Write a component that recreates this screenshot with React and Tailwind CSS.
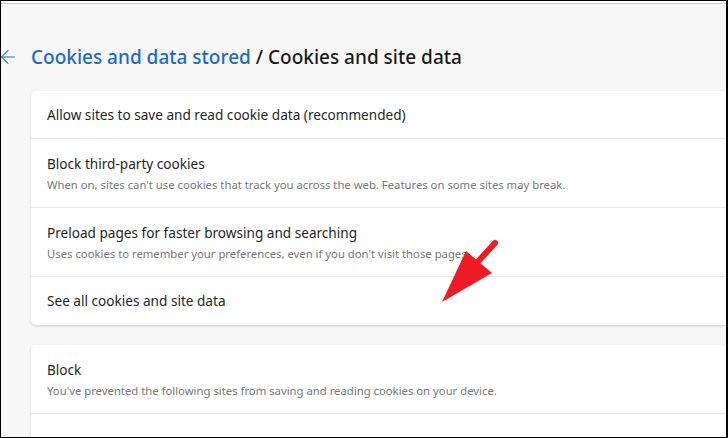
import { ArrowLeft } from 'lucide-react';

const font = { fontFamily: '"Segoe UI", "Noto Sans", "Open Sans", sans-serif' };

const Row = ({ title, desc, last }) => (
  <div className={`flex flex-col justify-center px-4 ${desc ? 'h-[69px]' : 'h-[48px]'} ${last ? '' : 'border-b border-[#e8e8e8]'}`}>
    <div className="text-[13.6px] leading-[20px] text-[#1f1f1f]">{title}</div>
    {desc && <div className="mt-[3px] text-[11.3px] leading-[16px] text-[#777777]">{desc}</div>}
  </div>
);

const Pointer = () => (
  <svg className="absolute left-0 top-0 pointer-events-none" width="728" height="438" viewBox="0 0 728 438">
    <line x1="495" y1="243" x2="474" y2="266" stroke="#ed1c24" strokeWidth="6" strokeLinecap="round" />
    <polygon points="466,251 492,273 442,302" fill="#ed1c24" />
  </svg>
);

export default function App() {
  return (
    <div className="relative w-[728px] h-[438px] overflow-hidden bg-black" style={font}>
      <div className="absolute left-[1px] top-[1px] right-[2px] bottom-[1px] flex flex-col bg-[#f7f7f7] overflow-hidden">
        <div className="h-[2px] bg-white shrink-0" />
        <div className="h-[1px] bg-[#c9c9c9] shrink-0" />
        <div className="flex items-center h-[52px] mt-[27px] shrink-0">
          <ArrowLeft size={22} strokeWidth={1.1} className="text-[#1b6ac9] ml-[-4px]" />
          <h1 className="ml-[12px] text-[19px] leading-[28px] font-medium text-[#1a1a1a] whitespace-nowrap">
            <span className="text-[#1b6ac9]">Cookies and data stored</span> / Cookies and site data
          </h1>
        </div>
        <div className="ml-[30px] mt-[8px] w-[720px] shrink-0 bg-white rounded-[5px] shadow-[0_1px_3px_rgba(0,0,0,0.16)]">
          <Row title="Allow sites to save and read cookie data (recommended)" />
          <Row
            title="Block third-party cookies"
            desc="When on, sites can't use cookies that track you across the web. Features on some sites may break."
          />
          <Row
            title="Preload pages for faster browsing and searching"
            desc="Uses cookies to remember your preferences, even if you don't visit those pages"
          />
          <Row title="See all cookies and site data" last />
        </div>
        <div className="ml-[30px] mt-[20px] w-[720px] shrink-0 bg-white rounded-[5px] shadow-[0_1px_3px_rgba(0,0,0,0.16)]">
          <div className="flex flex-col justify-center px-4 h-[69px] border-b border-[#e8e8e8]">
            <div className="text-[13.6px] leading-[20px] text-[#1f1f1f]">Block</div>
            <div className="mt-[3px] text-[11.3px] leading-[16px] text-[#777777]">
              You've prevented the following sites from saving and reading cookies on your device.
            </div>
          </div>
          <div className="pt-[19px] pl-[56px] text-[13px] leading-[18px] text-[#737373]">No sites added</div>
        </div>
      </div>
      <Pointer />
    </div>
  );
}
